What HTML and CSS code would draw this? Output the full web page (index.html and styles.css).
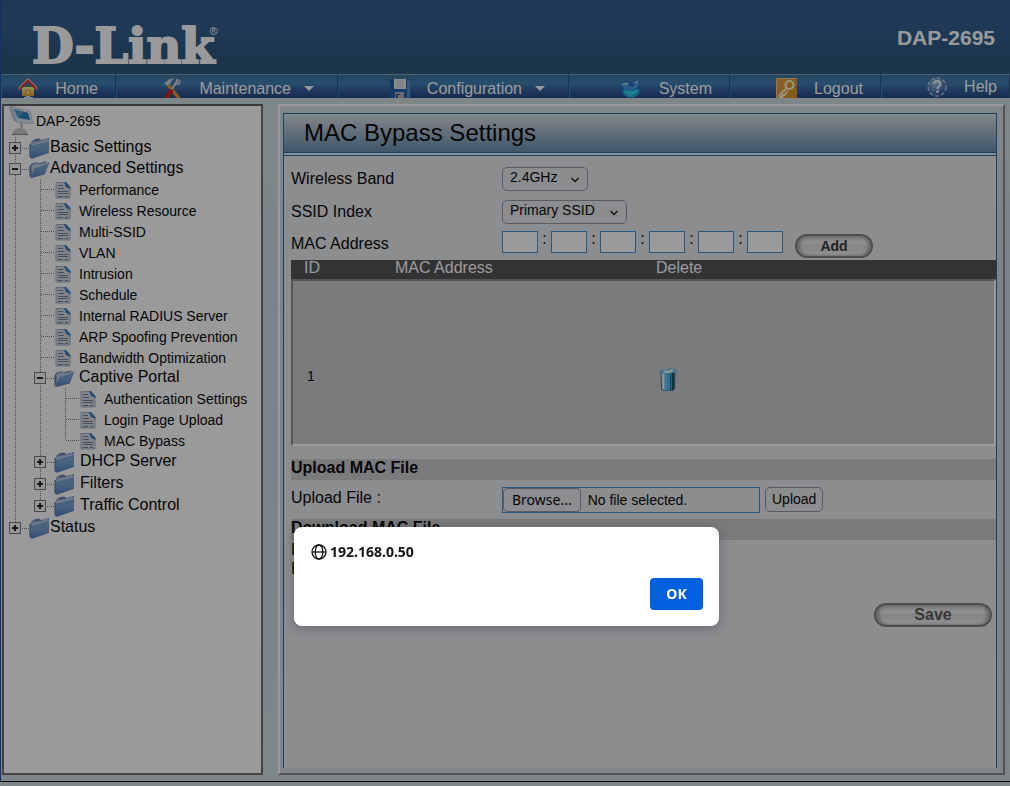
FILE: index.html
```html
<!DOCTYPE html>
<html lang="en">
<head>
<meta charset="utf-8">
<title>DAP-2695</title>
<link rel="stylesheet" href="styles.css">
</head>
<body>
<svg class="defs" aria-hidden="true">
  <defs>
    <linearGradient id="g-folder" x1="0" y1="0" x2="0" y2="1"><stop offset="0" stop-color="#7ba0cc"/><stop offset=".5" stop-color="#6f9fcc"/><stop offset="1" stop-color="#4f78bd"/></linearGradient>
    <linearGradient id="g-bin" x1="0" y1="0" x2="1" y2="0"><stop offset="0" stop-color="#e9f4fa"/><stop offset=".25" stop-color="#6cc4f4"/><stop offset=".6" stop-color="#4fb0e8"/><stop offset="1" stop-color="#0f7f82"/></linearGradient>
    <linearGradient id="g-house" x1="0" y1="0" x2="0" y2="1"><stop offset="0" stop-color="#fff2a0"/><stop offset="1" stop-color="#dfa012"/></linearGradient>
    <linearGradient id="g-key" x1="0" y1="0" x2="1" y2="1"><stop offset="0" stop-color="#e39a4a"/><stop offset="1" stop-color="#d99408"/></linearGradient>
    <radialGradient id="g-globe" cx=".5" cy=".7" r=".6"><stop offset="0" stop-color="#22cfe0"/><stop offset=".6" stop-color="#1b9fd6"/><stop offset="1" stop-color="#1668c0"/></radialGradient>
    <radialGradient id="g-help" cx=".4" cy=".3" r=".7"><stop offset="0" stop-color="#9fc0e4"/><stop offset="1" stop-color="#1f4f96"/></radialGradient>
    <symbol id="i-folder" viewBox="0 0 21 22">
      <path d="M2 5 6 2l4-.5L12 3l8-2v14L4 21z" fill="#6381ae"/>
      <path d="M1 7 3 5l8-1 2-1 6-1.500v2L3 8v13z" fill="#a9bedb"/>
      <path d="M3 8 20 3.500V16L3.500 21.500 1 20V7z" fill="url(#g-folder)"/>
      <path d="M3 8 20 3.500" stroke="#c3d6ea" stroke-width="1" fill="none"/>
      <path d="M1 7v13l2.500 1.500" stroke="#5068a2" fill="none"/>
    </symbol>
    <symbol id="i-open" viewBox="0 0 22 20">
      <path d="M1 6 3 4l5-1 2 1 8-2v4L3 18 1 17z" fill="#6e89b4"/>
      <path d="M2.500 6 4 5l5-1 2 1 6-1.500V6L6 9 3 16z" fill="#b7c9e1"/>
      <path d="M7 8.500 21.500 3 17 14.500 2 19z" fill="url(#g-folder)"/>
      <path d="M7 8.500 21.500 3" stroke="#c3d6ea" fill="none"/>
      <path d="M1 7v11l1.500 1L17 15" stroke="#5068a2" fill="none"/>
    </symbol>
    <symbol id="i-page" viewBox="0 0 16 18">
      <path d="M1 1.500h9.500L15 6v11H1z" fill="#d3dae4" stroke="#a3afc2"/>
      <path d="M9 1h2l4.500 5v2L11 6z" fill="#3b78b5"/>
      <path d="M3 4.500h5M3 7.500h6M3 10.500h10M3 12.500h10M3 15.500h5m2 0h3" stroke="#737c8b" stroke-width="1.200"/>
    </symbol>
  </defs>
</svg>

<div class="page">
  <header class="banner">
    <div class="logo">D-Link<sup>®</sup></div>
    <strong class="model">DAP-2695</strong>
  </header>

  <nav class="menu" aria-label="Main">
    <a href="#"><svg width="20" height="22" viewBox="0 0 20 22" aria-hidden="true"><path d="M8 17h4v2h3v1h-4v2H9v-2H6v-1h2z" fill="#d8dde2"/><path d="M4 9h12v9H4z" fill="url(#g-house)"/><path d="M8 12h4v5H8z" fill="#f8e27a" stroke="#b47b10" stroke-width=".7"/><path d="M1 11 10 2l9 9" fill="none" stroke="#f5b5a5" stroke-width="3"/><path d="M2 11 10 3l8 8" fill="none" stroke="#d52b22" stroke-width="2"/></svg>Home</a>
    <a href="#" class="has-menu"><svg width="20" height="22" viewBox="0 0 20 22" aria-hidden="true"><path d="m7 8 9 11" stroke="#e2912e" stroke-width="3.500" stroke-linecap="round"/><path d="M0 8 5 3c2-2 5-3 8-2-3 0-4 2-4 4L5 8 3 6z" fill="#c9d2de"/><path d="m8 14 6-9 2-4" fill="none" stroke="#d3dae3" stroke-width="2"/><path d="m14 6 3 0 1-4" fill="none" stroke="#d3dae3" stroke-width="1.500"/><path d="m5 19 4-6" stroke="#d41d12" stroke-width="4.500" stroke-linecap="round"/></svg>Maintenance<i class="caret"></i></a>
    <a href="#" class="has-menu"><svg width="20" height="22" viewBox="0 0 20 22" aria-hidden="true"><path d="M0 1h20v21H2l-2-2z" fill="#1f58a8"/><path d="M17 2h3v19h-3z" fill="#4e8dcc"/><path d="M4 1h12v10H4z" fill="#e9e7ea"/><path d="M6 3h8M6 5h8M6 7h8M6 9h8" stroke="#c9c6cc"/><path d="M5 14h9v8H5z" fill="#a8adb5"/><path d="M6 16h4v6H6z" fill="#234f91"/><path d="M8 17h2v3H8z" fill="#e2be79"/></svg>Configuration<i class="caret"></i></a>
    <a href="#"><svg width="22" height="20" viewBox="0 0 22 20" aria-hidden="true"><path d="M1 4 5 2h4l4 3 4-4 4 2-1 4 1 4-2 4-5 4H8l-5-4-2-5z" fill="#1b5fb4"/><ellipse cx="11" cy="12" rx="9" ry="6.500" fill="url(#g-globe)"/><path d="M1 5 5 3h4v4l4 1 1-4 4-2 2 3-3 4-6 2-7-1z" fill="#3d8fd8"/><path d="M2 5h6M15 4l3-2" stroke="#a5dcf6" stroke-width="1.500"/><path d="M4 12c4 3 10 3 14-1" stroke="#2fdbe6" stroke-width="2" fill="none"/></svg>System</a>
    <a href="#"><svg width="21" height="21" viewBox="0 0 21 21" aria-hidden="true"><path d="M0 0h21v21H0z" fill="url(#g-key)"/><path d="M.5 20V.5H20" stroke="#f4c68a" fill="none"/><circle cx="13.500" cy="7" r="4" fill="none" stroke="#fff0ce" stroke-width="2.200"/><path d="m10.500 10-7 7v2h3v-2h2l3-4" fill="none" stroke="#fff0ce" stroke-width="1.800"/></svg>Logout</a>
    <a href="#" class="help"><svg width="20" height="20" viewBox="0 0 20 20" aria-hidden="true"><circle cx="10" cy="10" r="9" fill="url(#g-help)" stroke="#a9bfdb" stroke-width="1.500" stroke-dasharray="4 2"/><path d="M7 7c0-4 6.500-4 6.500 0 0 2.500-3 2.500-3 5" fill="none" stroke="#f2f6fa" stroke-width="2"/><circle cx="10.500" cy="14.800" r="1.300" fill="#f2f6fa"/></svg>Help</a>
  </nav>

  <div class="columns">
    <aside class="sidebar">
      <div class="root"><svg width="26" height="30" viewBox="0 0 26 30" aria-hidden="true"><path d="M11 17h3v6h-3z" fill="#c5c9cf"/><path d="M3 29c0-9 16-9 16 0z" fill="#c9c9cb"/><path d="M3 28.500h16" stroke="#85868c"/><path d="m0 1 4-1 4 17-4-3z" fill="#c4c6e2"/><path d="m3 1 18 4 3 13L8 16z" fill="#dbe3ee" stroke="#c0cfde"/><path d="m5 3 14 4 2 7-12-2z" fill="#2279b8"/><path d="m5 3 10 3-6 7z" fill="#62b5dd" opacity=".55"/></svg>DAP-2695</div>
      <ul class="tree">
        <li><div class="row"><button class="toggle" aria-label="Expand Basic Settings"></button><i class="dots"></i><svg class="folder" aria-hidden="true"><use href="#i-folder"/></svg><a href="#">Basic Settings</a></div></li>
        <li><div class="row compact"><button class="toggle open" aria-label="Collapse Advanced Settings"></button><i class="dots"></i><svg class="folder" aria-hidden="true"><use href="#i-open"/></svg><a href="#">Advanced Settings</a></div>
          <ul>
            <li class="leaf"><i class="dots"></i><svg aria-hidden="true"><use href="#i-page"/></svg><a href="#">Performance</a></li>
            <li class="leaf"><i class="dots"></i><svg aria-hidden="true"><use href="#i-page"/></svg><a href="#">Wireless Resource</a></li>
            <li class="leaf"><i class="dots"></i><svg aria-hidden="true"><use href="#i-page"/></svg><a href="#">Multi-SSID</a></li>
            <li class="leaf"><i class="dots"></i><svg aria-hidden="true"><use href="#i-page"/></svg><a href="#">VLAN</a></li>
            <li class="leaf"><i class="dots"></i><svg aria-hidden="true"><use href="#i-page"/></svg><a href="#">Intrusion</a></li>
            <li class="leaf"><i class="dots"></i><svg aria-hidden="true"><use href="#i-page"/></svg><a href="#">Schedule</a></li>
            <li class="leaf"><i class="dots"></i><svg aria-hidden="true"><use href="#i-page"/></svg><a href="#">Internal RADIUS Server</a></li>
            <li class="leaf"><i class="dots"></i><svg aria-hidden="true"><use href="#i-page"/></svg><a href="#">ARP Spoofing Prevention</a></li>
            <li class="leaf"><i class="dots"></i><svg aria-hidden="true"><use href="#i-page"/></svg><a href="#">Bandwidth Optimization</a></li>
            <li><div class="row compact"><button class="toggle open" aria-label="Collapse Captive Portal"></button><i class="dots"></i><svg class="folder" aria-hidden="true"><use href="#i-open"/></svg><a href="#">Captive Portal</a></div>
              <ul>
                <li class="leaf"><i class="dots"></i><svg aria-hidden="true"><use href="#i-page"/></svg><a href="#">Authentication Settings</a></li>
                <li class="leaf"><i class="dots"></i><svg aria-hidden="true"><use href="#i-page"/></svg><a href="#">Login Page Upload</a></li>
                <li class="leaf"><i class="dots"></i><svg aria-hidden="true"><use href="#i-page"/></svg><a href="#">MAC Bypass</a></li>
              </ul>
            </li>
            <li><div class="row inner"><button class="toggle" aria-label="Expand DHCP Server"></button><i class="dots"></i><svg class="folder" aria-hidden="true"><use href="#i-folder"/></svg><a href="#">DHCP Server</a></div></li>
            <li><div class="row inner"><button class="toggle" aria-label="Expand Filters"></button><i class="dots"></i><svg class="folder" aria-hidden="true"><use href="#i-folder"/></svg><a href="#">Filters</a></div></li>
            <li><div class="row inner"><button class="toggle" aria-label="Expand Traffic Control"></button><i class="dots"></i><svg class="folder" aria-hidden="true"><use href="#i-folder"/></svg><a href="#">Traffic Control</a></div></li>
          </ul>
        </li>
        <li><div class="row"><button class="toggle" aria-label="Expand Status"></button><i class="dots"></i><svg class="folder" aria-hidden="true"><use href="#i-folder"/></svg><a href="#">Status</a></div></li>
      </ul>
    </aside>

    <main class="frame">
      <div class="panel">
        <h1>MAC Bypass Settings</h1>
        <form class="body">
          <div class="field"><label for="band">Wireless Band</label><select id="band" class="band"><option>2.4GHz</option></select></div>
          <div class="field"><label for="ssid">SSID Index</label><select id="ssid" class="ssid"><option>Primary SSID</option></select></div>
          <div class="field mac"><label for="m1">MAC Address</label>
            <div class="octets"><input id="m1" maxlength="2"><span>:</span><input aria-label="MAC byte 2" maxlength="2"><span>:</span><input aria-label="MAC byte 3" maxlength="2"><span>:</span><input aria-label="MAC byte 4" maxlength="2"><span>:</span><input aria-label="MAC byte 5" maxlength="2"><span>:</span><input aria-label="MAC byte 6" maxlength="2"></div>
            <button type="button" class="pill add">Add</button>
          </div>
          <table class="list">
            <thead><tr><th class="c-id">ID</th><th class="c-mac">MAC Address</th><th>Delete</th></tr></thead>
            <tbody><tr><td>1</td><td></td><td><button type="button" class="bin" aria-label="Delete entry 1"><svg width="18" height="23" viewBox="0 0 18 23" aria-hidden="true"><path d="M2 4h14l-.5 17-2 2h-9l-2-2z" fill="url(#g-bin)" stroke="#54636e"/><path d="M11.500 6v16" stroke="#226b96"/><path d="M14 5v17" stroke="#0c3b46" stroke-width="1.500"/><path d="M4.500 6v15" stroke="#eef6fa" stroke-width="1.500"/><path d="M0 3 5 1l2 1 4-2 7 2-1 3-7-1-9 2z" fill="#6dbbe2"/><path d="m4 2 5 1 3-2 3 2-4 2H6z" fill="#edf5f8"/></svg></button></td></tr></tbody>
          </table>
          <h2>Upload MAC File</h2>
          <div class="field upload"><label for="file">Upload File :</label>
            <div class="file"><span class="browse">Browse...</span><span>No file selected.</span><input id="file" type="file"></div>
            <button type="button" class="plain">Upload</button>
          </div>
          <h2>Download MAC File</h2>
          <p class="download">Download MAC File to Local Hard Driver :</p>
          <div class="actions"><button type="button" class="pill save">Save</button></div>
        </form>
      </div>
    </main>
  </div>
</div>

<div class="overlay">
  <div class="dialog" role="alertdialog" aria-modal="true" aria-labelledby="origin">
    <div class="origin" id="origin"><svg width="16" height="16" viewBox="0 0 16 16" fill="none" stroke="#15141a" stroke-width="1.300" aria-hidden="true"><circle cx="8" cy="8" r="7"/><ellipse cx="8" cy="8" rx="3.800" ry="7"/><path d="M1 8h14"/></svg>192.168.0.50</div>
    <button type="button" class="ok">OK</button>
  </div>
</div>
</body>
</html>
```
FILE: styles.css
```css
* { box-sizing: border-box; }
body { margin: 0; font-family: "Liberation Sans", Arial, sans-serif; font-size: 16px; color: #000; background: #cfdde1; }
button, input, select { font-family: inherit; color: inherit; }
a { color: inherit; text-decoration: none; }
ul { list-style: none; margin: 0; padding: 0; }
svg { flex: none; }
.defs { position: absolute; width: 0; height: 0; }

.page { display: flex; flex-direction: column; min-height: calc(100vh - 4px); border-left: 1px solid #174b9e; border-bottom: 1px solid #000; }

.banner { display: flex; justify-content: space-between; align-items: flex-start; height: 74px; padding: 18px 15px 0 31px; color: #fff; background: linear-gradient(#2a5588, #2b5988 40%, #245278 75%, #245278); }
.logo { font: bold 48px/56px "DejaVu Serif", serif; -webkit-text-stroke: 2px #fff; white-space: nowrap; }
.logo sup { margin-left: -5px; font: 11px/12px "Liberation Sans", sans-serif; -webkit-text-stroke: 0; vertical-align: 28px; }
.model { font-size: 21px; line-height: 40px; }

.menu { display: grid; grid-template-columns: 115fr 222fr 231fr 161fr 151fr 129fr; height: 24px; color: #fff; }
.menu a { display: flex; align-items: center; justify-content: flex-end; padding: 4px 17px 0 0; overflow: hidden; line-height: 20px; border-top: 1px solid #7c9fbd; border-right: 1px solid #1f4c80; border-left: 1px solid #3a76a8; background: linear-gradient(#3c6c94, #3a7cb2 35%, #2b5c94 65%, #204080); }
.menu svg { margin-right: 17px; }
.menu a.has-menu { padding-right: 23px; }
.menu a.help { padding: 0 12px 0 0; }
.caret { margin-left: 13px; border: 5px solid transparent; border-top-color: #fff; border-bottom: 0; }

.columns { flex: 1; display: flex; gap: 15px; padding: 6px 5px 6px 1px; background: linear-gradient(#cfdddf, #ccd9e5 35%, #cddce1); }
.sidebar { flex: none; width: 261px; border: 2px solid #69696c; border-top-color: #58585b; background: #fff; }
.root { display: flex; gap: 1px; height: 31px; padding-left: 5px; font-size: 14px; line-height: 30px; }
.tree { margin-left: 5px; background: repeating-linear-gradient(#777 0 1px, transparent 1px 2px) 6px 0 / 1px calc(100% - 11px) no-repeat; }
.tree ul { margin-left: 25px; background: repeating-linear-gradient(#777 0 1px, transparent 1px 2px) 6px 0 / 1px calc(100% - 11px) no-repeat; }
.row { display: flex; align-items: center; height: 22px; }
.row.compact { height: 20px; }
.row a { line-height: 20px; padding-bottom: 3px; }
.tree ul .row a { padding-left: 4px; }
.tree ul .row.inner a { padding-left: 5px; }
.toggle { flex: none; width: 12px; height: 12px; padding: 0; border: 1px solid #777; background: linear-gradient(#222, #222) center / 6px 2px no-repeat, linear-gradient(#222, #222) center / 2px 6px no-repeat, #f7f7f7; }
.toggle.open { background: linear-gradient(#222, #222) center / 6px 2px no-repeat, #f7f7f7; }
.dots { flex: none; width: 7px; margin-left: 1px; height: 1px; background: repeating-linear-gradient(90deg, #777 0 1px, transparent 1px 2px); }
.folder { width: 21px; height: 22px; }
.leaf { display: flex; align-items: center; height: 21px; padding-left: 7px; font-size: 14px; }
.leaf .dots { width: 13px; margin: 0 1px 0 0; }
.leaf svg { width: 16px; height: 18px; margin-right: 8px; }
.leaf a { line-height: 20px; white-space: nowrap; }

.frame { flex: 1; min-width: 0; display: flex; padding: 7px 6px 5px 3px; border: 2px solid; border-color: #fff #85858a #85858a #fff; }
.panel { flex: 1; min-width: 0; border: 1px solid #1a6a9c; border-bottom: 0; background: #e6e8eb; }
h1 { margin: 0; padding-left: 20px; font-size: 24px; font-weight: normal; line-height: 38px; border-bottom: 1px solid #1a6a9c; background: linear-gradient(#d6e0e4, #abbccc 40%, #618bab); }
.body { margin-top: 2px; padding: 6px 0 0 7px; border-top: 1px solid #1a6a9c; }
.field { display: flex; align-items: center; height: 33px; }
.field > label { flex: none; width: 211px; }
.mac { height: 32px; align-items: flex-start; line-height: 32px; }
.field select { height: 24px; padding: 0 8px 4px 7px; font-size: 14px; appearance: none; border: 1px solid #9294a2; border-radius: 5px; background: url("data:image/svg+xml,%3Csvg xmlns='http://www.w3.org/2000/svg' width='8' height='6'%3E%3Cpath d='M.5 1 4 4.500 7.500 1' fill='none' stroke='%23111' stroke-width='1.400'/%3E%3C/svg%3E") right 8px top 9px no-repeat; }
.field .band { width: 86px; }
.field .ssid { width: 125px; }
.octets { display: flex; padding-top: 3px; line-height: 16px; }
.octets input { width: 36px; height: 22px; padding: 0 4px; border: 1px solid #3f8fd4; background: #fff; font-size: 14px; }
.octets span { width: 13px; text-align: center; }
.pill { height: 24px; padding: 0; border: 2px solid #7d7d80; border-radius: 12px; color: #333; background: linear-gradient(#c5c5c7, #efeff0 35%, #d9d9db 50%, #f2f2f3); box-shadow: inset 3px 0 3px #aaa, inset -3px 0 3px #aaa; }
.add { width: 78px; margin: 6px 0 0 12px; font: bold 14px/18px "Liberation Sans", sans-serif; }
.save { width: 118px; font-size: 16px; font-weight: bold; color: #555; }

.list { width: 100%; border-spacing: 0; border-collapse: separate; display: block; }
.list thead, .list tbody { display: grid; }
.list tr { display: grid; grid-template-columns: 104px 261px 1fr; }
.list th { height: 19px; padding: 0; text-align: left; font-weight: normal; line-height: 16px; color: #fff; background: #4f4f50; }
.list .c-id { padding-left: 13px; }
.list tbody { height: 167px; padding-top: 34px; border: 2px solid; border-color: #88888b #fff #fff #88888b; background: #cacacb; align-items: center; }
.list td { padding: 0; font-size: 14px; }
.list td:first-child { padding-left: 14px; }
.bin { display: block; padding: 0 0 0 1px; border: 0; background: none; }
.bin svg { display: block; }
h2 { margin: 0; font-size: 16px; line-height: 17px; padding-bottom: 4px; background: #cacacb; }
.list + h2 { margin-top: 13px; }
.upload { height: 39px; }
.upload label { padding-bottom: 4px; }
.file { position: relative; display: flex; align-items: center; gap: 7px; width: 258px; height: 26px; border: 1px solid #3f8fd4; font-size: 14px; }
.file input { position: absolute; inset: 0; width: 100%; opacity: 0; }
.browse { padding: 0 8px; border: 1px solid #9294a2; border-radius: 4px; font: 14px/22px "Noto Sans", sans-serif; }
.plain { height: 25px; margin-left: 5px; padding: 0 6px 2px; border: 1px solid #8f90a0; border-radius: 5px; background: none; font-size: 14px; }
.download { width: 211px; margin: 0; line-height: 19px; }
.actions { display: flex; justify-content: flex-end; padding: 25px 4px 0 0; }

.overlay { position: fixed; inset: 0; display: flex; justify-content: center; align-items: flex-end; padding: 0 0 160px 3px; background: rgba(14, 14, 17, .42); }
.dialog { display: flex; flex-direction: column; width: 425px; padding: 16px 16px 16px 17px; border-radius: 8px; background: #fff; box-shadow: 0 2px 12px rgba(20, 20, 25, .3); font-family: "Noto Sans", sans-serif; color: #15141a; }
.origin { display: flex; align-items: center; gap: 3px; font-size: 14px; font-weight: bold; line-height: 18px; }
.ok { align-self: flex-end; width: 53px; height: 32px; margin-top: 17px; padding: 0 0 1px; border: 0; border-radius: 4px; background: #0060df; color: #fff; font-size: 14px; font-weight: bold; }
```
